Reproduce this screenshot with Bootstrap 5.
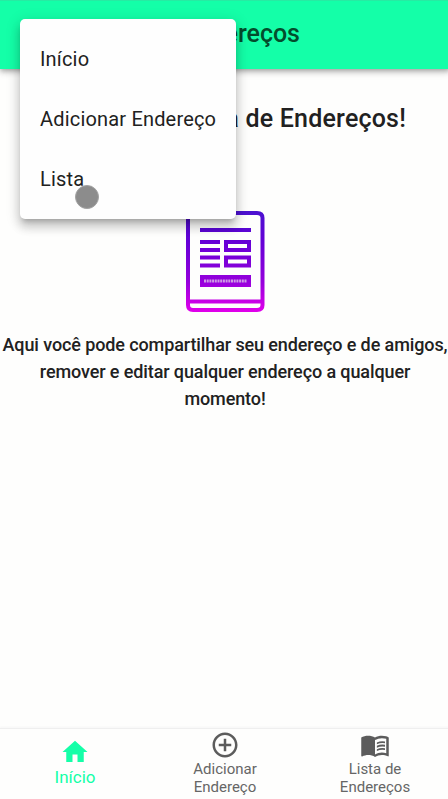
<!DOCTYPE html>
<html lang="pt-BR">
<head>
<meta charset="utf-8">
<meta name="viewport" content="width=device-width, initial-scale=1">
<title>Endereços</title>
<link href="https://cdn.jsdelivr.net/npm/bootstrap@5.3.0/dist/css/bootstrap.min.css" rel="stylesheet">
<style>
body{font-family:Roboto,"Noto Sans",sans-serif;background:#fefefd;color:#212121;height:799px;overflow:hidden}
.app-shell{width:450px;height:799px}
.app-top{height:69px;background:#14ffa8;box-shadow:0 2px 4px -1px rgba(0,0,0,.2),0 4px 5px rgba(0,0,0,.14),0 1px 10px rgba(0,0,0,.12);border-top:1px solid #27eba3}
.app-title{font-size:25px;line-height:30px;font-weight:500;color:#034d2c;padding-top:18px;padding-right:150px}
.welcome{font-size:25px;line-height:32px;font-weight:500;padding-top:34px;padding-right:44px;letter-spacing:.2px}
.book-art{margin-top:75px;height:103px}
.intro{font-size:18px;line-height:27px;font-weight:500;margin-top:18px;letter-spacing:-.11px}
.app-menu{left:20px;top:19px;width:216px;height:200px;border-radius:5px;padding:10px 0;background:#fefefe;box-shadow:0 5px 5px -3px rgba(0,0,0,.2),0 8px 10px 1px rgba(0,0,0,.14),0 3px 14px 2px rgba(0,0,0,.12)}
.menu-entry{height:60px;padding-left:20px;font-size:20px;color:#212121;letter-spacing:.18px}
.touch-dot{left:75px;top:185px;width:24px;height:24px;background:#8c8c8c;border:1px solid #a3a3a3}
.app-bottom{height:71px;border-top:1px solid #efefef;box-shadow:0 -1px 2px #f6f6f6}
.tab-entry{width:150px;font-size:15px;line-height:18px;color:#666;padding-top:1px}
.tab-entry svg{width:30px;height:30px;fill:#5c5c5c}
.tab-current{color:#14ffa8;font-size:17px}
.tab-current span{padding-top:1px}
.tab-current svg{fill:#14ffa8}
</style>
</head>
<body>
<div class="app-shell d-flex flex-column position-relative">
  <header class="app-top flex-shrink-0"><div class="app-title text-end">Endereços</div></header>
  <main class="flex-grow-1 d-flex flex-column text-center">
    <h1 class="welcome m-0 text-nowrap text-end">Bem vindo a Lista de Endereços!</h1>
    <svg class="book-art flex-shrink-0 align-self-center" width="80" height="103" viewBox="0 0 80 103" fill="none">
      <defs><linearGradient id="ink" gradientUnits="userSpaceOnUse" x1="0" y1="0" x2="0" y2="103"><stop stop-color="#4a12d0"/><stop offset=".3" stop-color="#6400d6"/><stop offset=".7" stop-color="#9600dc"/><stop offset="1" stop-color="#e400ec"/></linearGradient></defs>
      <g stroke="url(#ink)" stroke-width="4">
        <path d="M8 3H72Q77.500 3 77.500 8V95Q77.500 100 72 100H8Q3 100 3 95V8Q3 3 8 3Z"/>
        <path fill="url(#ink)" stroke="none" d="M3 89.500H77V93.500H3Z"/>
        <path d="M15 32H35M15 40H35M15 47.500H35M15 55.500H35"/>
        <path d="M41 32H64V40H41ZM41 47.500H64V55.500H41Z"/>
      </g>
      <path fill="url(#ink)" d="M15 18H66V22H15ZM15 65H66V77H15Z"/>
      <path stroke="#cf9be5" stroke-width="3" stroke-dasharray="2 .7" d="M19 71H62"/>
    </svg>
    <p class="intro mb-0 text-nowrap">Aqui você pode compartilhar seu endereço e de amigos,<br>remover e editar qualquer endereço a qualquer<br>momento!</p>
  </main>
  <nav class="app-bottom d-flex flex-shrink-0 text-center">
    <div class="tab-entry tab-current d-flex flex-column align-items-center pt-2"><svg viewBox="0 0 24 24"><path d="M10 20v-6h4v6h5v-8h3L12 3 2 12h3v8z"/></svg><span>Início</span></div>
    <div class="tab-entry d-flex flex-column align-items-center"><svg viewBox="0 0 24 24"><path d="M13 7h-2v4H7v2h4v4h2v-4h4v-2h-4V7zm-1-5C6.480 2 2 6.480 2 12s4.480 10 10 10 10-4.480 10-10S17.520 2 12 2zm0 18c-4.410 0-8-3.590-8-8s3.590-8 8-8 8 3.590 8 8-3.590 8-8 8z"/></svg><span>Adicionar<br>Endereço</span></div>
    <div class="tab-entry d-flex flex-column align-items-center"><svg viewBox="0 0 24 24"><path d="M21 5c-1.110-.350-2.330-.5-3.500-.5-1.950 0-4.050.4-5.500 1.500-1.450-1.100-3.550-1.500-5.500-1.500S2.450 4.900 1 6v14.650c0 .250.250.500.500.500.100 0 .150-.050.250-.050C3.100 20.450 5.050 20 6.500 20c1.950 0 4.050.400 5.500 1.500 1.350-.850 3.800-1.500 5.500-1.500 1.650 0 3.350.300 4.750 1.050.100.050.150.050.250.050.250 0 .500-.250.500-.500V6c-.600-.450-1.250-.750-2-1zm0 13.500c-1.100-.350-2.300-.5-3.500-.5-1.700 0-4.150.650-5.500 1.500V8c1.350-.850 3.800-1.500 5.500-1.500 1.200 0 2.400.150 3.500.500v11.500z"/><path d="M13.500 9.900Q16.500 8.500 20 9.100V10.600Q16.500 10 13.500 11.400ZM13.500 12.600Q16.500 11.200 20 11.800V13.300Q16.500 12.700 13.500 14.100ZM13.500 15.300Q16.500 13.900 20 14.500V16Q16.500 15.400 13.500 16.800Z"/></svg><span>Lista de<br>Endereços</span></div>
  </nav>
  <div class="app-menu position-absolute">
    <div class="menu-entry d-flex align-items-center">Início</div>
    <div class="menu-entry d-flex align-items-center text-nowrap">Adicionar Endereço</div>
    <div class="menu-entry d-flex align-items-center">Lista</div>
  </div>
  <div class="touch-dot position-absolute rounded-circle"></div>
</div>
<script src="https://cdn.jsdelivr.net/npm/bootstrap@5.3.0/dist/js/bootstrap.bundle.min.js"></script>
</body>
</html>
